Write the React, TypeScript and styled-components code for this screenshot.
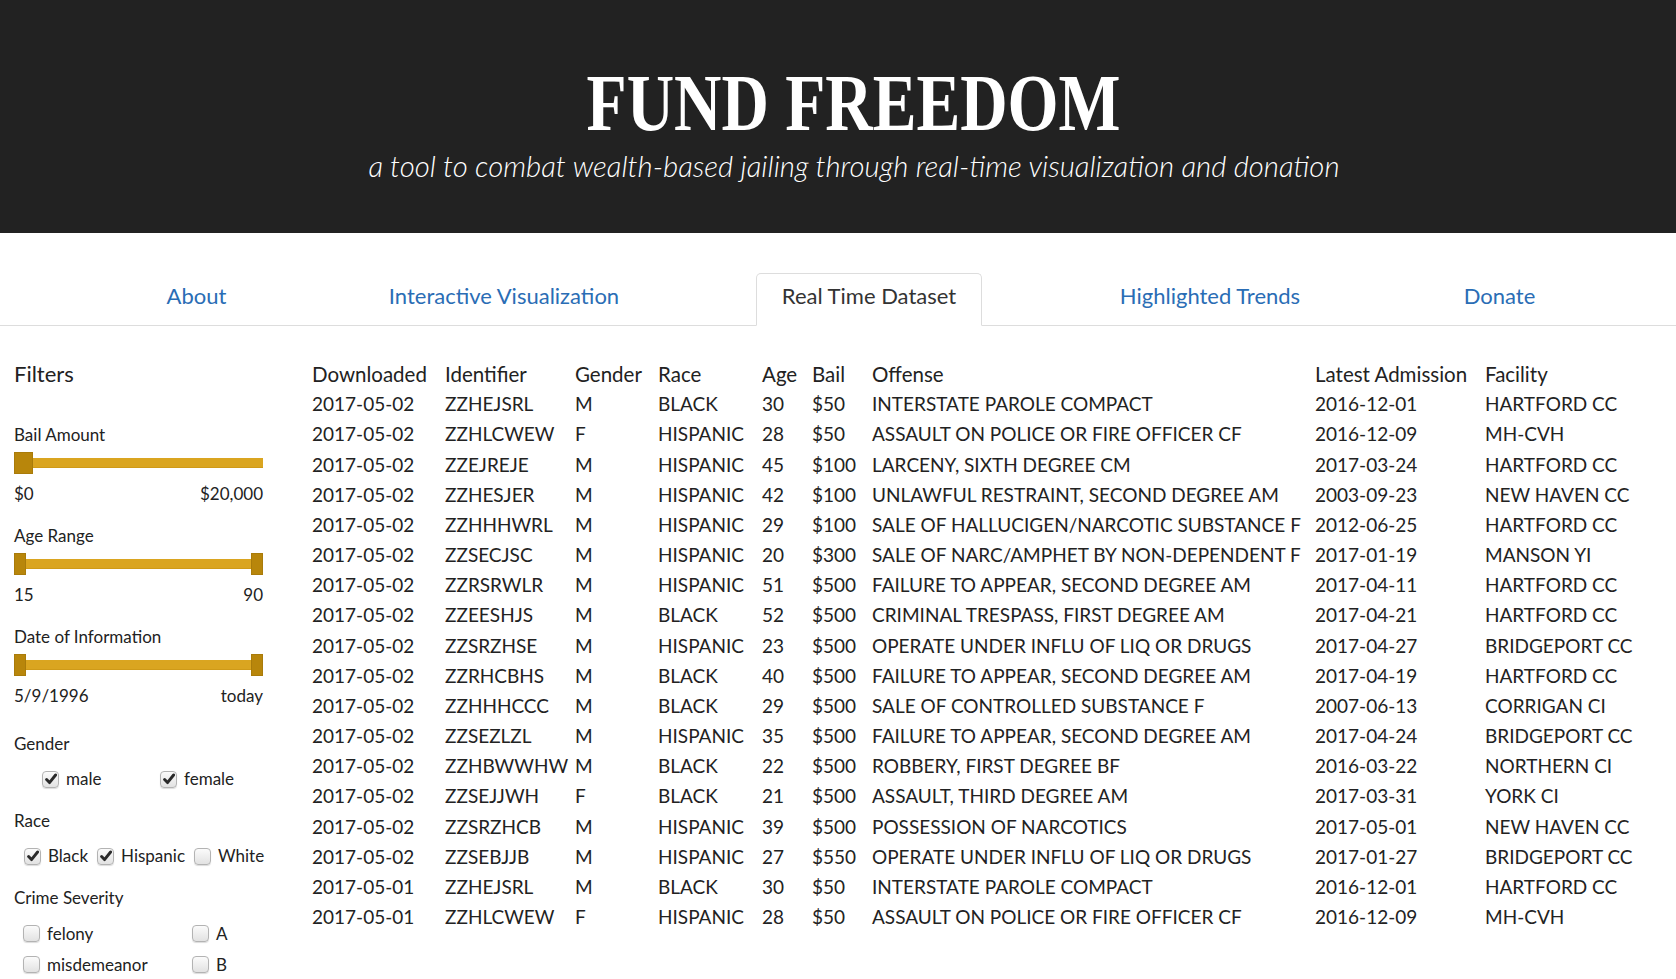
import React from "react";
import styled, { createGlobalStyle } from "styled-components";

const GlobalStyle = createGlobalStyle`
  html, body { margin: 0; padding: 0; overflow: hidden; background: #fff; }
  body { font-family: Lato, "Open Sans", sans-serif; color: #222; }
`;

const Header = styled.header`
  background: #222;
  height: 233px;
  box-sizing: border-box;
  padding: 61px 0 0 32px;
  display: flex;
  flex-direction: column;
  align-items: center;
`;

const Title = styled.h1`
  margin: 0;
  font-family: "Liberation Serif", "Times New Roman", serif;
  font-weight: 700;
  font-size: 80px;
  line-height: 84px;
  color: #fff;
  transform: scaleX(0.82);
  white-space: nowrap;
`;

const Subtitle = styled.p`
  margin: 4px 0 0;
  font-family: Lato, sans-serif;
  font-style: italic;
  font-weight: 300;
  font-size: 29.3px;
  line-height: 34px;
  color: #fff;
  white-space: nowrap;
`;

const Nav = styled.nav`
  margin-top: 40px;
  display: flex;
  padding-left: 141px;
  border-bottom: 1px solid #ddd;
  height: 52px;
`;

const Tab = styled.a<{ $active?: boolean; $w: number }>`
  box-sizing: border-box;
  width: ${(p) => p.$w}px;
  margin-right: 110px;
  height: ${(p) => (p.$active ? 53 : 52)}px;
  border: 1px solid ${(p) => (p.$active ? "#ddd" : "transparent")};
  border-bottom-color: ${(p) => (p.$active ? "#fff" : "transparent")};
  border-radius: 5px 5px 0 0;
  background: #fff;
  display: flex;
  justify-content: center;
  padding-top: 7px;
  font-size: 22px;
  line-height: 30px;
  color: ${(p) => (p.$active ? "#333" : "#2a6db5")};
  text-decoration: none;
  white-space: nowrap;
`;

const Main = styled.main`
  display: flex;
  padding: 33px 14px 0;
`;

const Sidebar = styled.aside`
  width: 249px;
  flex-shrink: 0;
  font-size: 17px;
  line-height: 24px;
`;

const FiltersTitle = styled.h3`
  margin: 0;
  font-size: 22px;
  font-weight: 400;
  line-height: 30px;
`;

const SliderGroup = styled.div<{ $first?: boolean }>`
  margin-top: ${(p) => (p.$first ? 34 : 18)}px;
`;

const Label = styled.div<{ $mt?: number }>`
  margin-top: ${(p) => p.$mt ?? 0}px;
`;

const Track = styled.div`
  position: relative;
  height: 22px;
  margin-top: 5px;
`;

const Bar = styled.div`
  position: absolute;
  left: 0;
  right: 0;
  top: 6px;
  height: 10px;
  background: #daa520;
  border-bottom: 1px solid #cf9a18;
  box-sizing: border-box;
`;

const Handle = styled.div<{ $side: "left" | "right"; $wide?: boolean }>`
  position: absolute;
  top: 0;
  ${(p) => p.$side}: 0;
  width: ${(p) => (p.$wide ? 19 : 12)}px;
  height: 22px;
  background: #b8860b;
  border: 1px solid #a97b0a;
  box-sizing: border-box;
`;

const RangeValues = styled.div`
  display: flex;
  justify-content: space-between;
  margin-top: 8px;
`;

const CheckGrid = styled.div<{ $cols: string; $pl: number; $lh: number }>`
  display: grid;
  grid-template-columns: ${(p) => p.$cols};
  padding-left: ${(p) => p.$pl}px;
  margin-top: 8px;
  line-height: ${(p) => p.$lh}px;
`;

const CheckRow = styled.div`
  display: flex;
  gap: 9px;
  padding-left: 10px;
  margin-top: 8px;
  line-height: 30px;
`;

const CheckItem = styled.label`
  display: inline-flex;
  align-items: center;
  gap: 7px;
`;

const Box = styled.span`
  width: 17px;
  height: 17px;
  box-sizing: border-box;
  border: 1px solid #b3b3b3;
  border-radius: 4px;
  background: linear-gradient(#fbfbfb, #e2e2e2);
  box-shadow: 0 1px 1px rgba(0, 0, 0, 0.14);
  display: inline-flex;
  align-items: center;
  justify-content: center;
`;

const Check = ({ checked, label }: { checked?: boolean; label: string }) => (
  <CheckItem>
    <Box>
      {checked && (
        <svg width="12" height="12" viewBox="0 0 12 12">
          <path d="M1.6 6.6 L4.5 9.6 L10.6 2.0" fill="none" stroke="#2a2a2a" strokeWidth="2.9" strokeLinecap="round" strokeLinejoin="round" />
        </svg>
      )}
    </Box>
    {label}
  </CheckItem>
);

const TableWrap = styled.section`
  margin-left: 49px;
  flex: 1;
  font-size: 19px;
  line-height: 30.17px;
`;

const Row = styled.div<{ $head?: boolean }>`
  display: grid;
  grid-template-columns: 133px 130px 83px 104px 50px 60px 443px 170px 1fr;
  white-space: nowrap;
  font-size: ${(p) => (p.$head ? "20.5px" : "inherit")};
`;

const Cell = styled.span``;

const rows: string[][] = [
  ["2017-05-02", "ZZHEJSRL", "M", "BLACK", "30", "$50", "INTERSTATE PAROLE COMPACT", "2016-12-01", "HARTFORD CC"],
  ["2017-05-02", "ZZHLCWEW", "F", "HISPANIC", "28", "$50", "ASSAULT ON POLICE OR FIRE OFFICER CF", "2016-12-09", "MH-CVH"],
  ["2017-05-02", "ZZEJREJE", "M", "HISPANIC", "45", "$100", "LARCENY, SIXTH DEGREE CM", "2017-03-24", "HARTFORD CC"],
  ["2017-05-02", "ZZHESJER", "M", "HISPANIC", "42", "$100", "UNLAWFUL RESTRAINT, SECOND DEGREE AM", "2003-09-23", "NEW HAVEN CC"],
  ["2017-05-02", "ZZHHHWRL", "M", "HISPANIC", "29", "$100", "SALE OF HALLUCIGEN/NARCOTIC SUBSTANCE F", "2012-06-25", "HARTFORD CC"],
  ["2017-05-02", "ZZSECJSC", "M", "HISPANIC", "20", "$300", "SALE OF NARC/AMPHET BY NON-DEPENDENT F", "2017-01-19", "MANSON YI"],
  ["2017-05-02", "ZZRSRWLR", "M", "HISPANIC", "51", "$500", "FAILURE TO APPEAR, SECOND DEGREE AM", "2017-04-11", "HARTFORD CC"],
  ["2017-05-02", "ZZEESHJS", "M", "BLACK", "52", "$500", "CRIMINAL TRESPASS, FIRST DEGREE AM", "2017-04-21", "HARTFORD CC"],
  ["2017-05-02", "ZZSRZHSE", "M", "HISPANIC", "23", "$500", "OPERATE UNDER INFLU OF LIQ OR DRUGS", "2017-04-27", "BRIDGEPORT CC"],
  ["2017-05-02", "ZZRHCBHS", "M", "BLACK", "40", "$500", "FAILURE TO APPEAR, SECOND DEGREE AM", "2017-04-19", "HARTFORD CC"],
  ["2017-05-02", "ZZHHHCCC", "M", "BLACK", "29", "$500", "SALE OF CONTROLLED SUBSTANCE F", "2007-06-13", "CORRIGAN CI"],
  ["2017-05-02", "ZZSEZLZL", "M", "HISPANIC", "35", "$500", "FAILURE TO APPEAR, SECOND DEGREE AM", "2017-04-24", "BRIDGEPORT CC"],
  ["2017-05-02", "ZZHBWWHW", "M", "BLACK", "22", "$500", "ROBBERY, FIRST DEGREE BF", "2016-03-22", "NORTHERN CI"],
  ["2017-05-02", "ZZSEJJWH", "F", "BLACK", "21", "$500", "ASSAULT, THIRD DEGREE AM", "2017-03-31", "YORK CI"],
  ["2017-05-02", "ZZSRZHCB", "M", "HISPANIC", "39", "$500", "POSSESSION OF NARCOTICS", "2017-05-01", "NEW HAVEN CC"],
  ["2017-05-02", "ZZSEBJJB", "M", "HISPANIC", "27", "$550", "OPERATE UNDER INFLU OF LIQ OR DRUGS", "2017-01-27", "BRIDGEPORT CC"],
  ["2017-05-01", "ZZHEJSRL", "M", "BLACK", "30", "$50", "INTERSTATE PAROLE COMPACT", "2016-12-01", "HARTFORD CC"],
  ["2017-05-01", "ZZHLCWEW", "F", "HISPANIC", "28", "$50", "ASSAULT ON POLICE OR FIRE OFFICER CF", "2016-12-09", "MH-CVH"],
];

const headers = ["Downloaded", "Identifier", "Gender", "Race", "Age", "Bail", "Offense", "Latest Admission", "Facility"];

const tabs = [
  { label: "About", w: 111 },
  { label: "Interactive Visualization", w: 284 },
  { label: "Real Time Dataset", w: 226, active: true },
  { label: "Highlighted Trends", w: 236 },
  { label: "Donate", w: 123 },
];

const Slider = ({ label, min, max, range, first }: { label: string; min: string; max: string; range?: boolean; first?: boolean }) => (
  <SliderGroup $first={first}>
    <Label>{label}</Label>
    <Track>
      <Bar />
      <Handle $side="left" $wide={!range} />
      {range && <Handle $side="right" />}
    </Track>
    <RangeValues>
      <span>{min}</span>
      <span>{max}</span>
    </RangeValues>
  </SliderGroup>
);

export default function App() {
  return (
    <>
      <GlobalStyle />
      <Header>
        <Title>FUND FREEDOM</Title>
        <Subtitle>a tool to combat wealth-based jailing through real-time visualization and donation</Subtitle>
      </Header>
      <Nav>
        {tabs.map((t) => (
          <Tab key={t.label} $w={t.w} $active={t.active} href="#">
            {t.label}
          </Tab>
        ))}
      </Nav>
      <Main>
        <Sidebar>
          <FiltersTitle>Filters</FiltersTitle>
          <Slider first label="Bail Amount" min="$0" max="$20,000" />
          <Slider range label="Age Range" min="15" max="90" />
          <Slider range label="Date of Information" min="5/9/1996" max="today" />
          <Label $mt={24}>Gender</Label>
          <CheckGrid $cols="118px 1fr" $pl={28} $lh={30}>
            <Check checked label="male" />
            <Check checked label="female" />
          </CheckGrid>
          <Label $mt={15}>Race</Label>
          <CheckRow>
            <Check checked label="Black" />
            <Check checked label="Hispanic" />
            <Check label="White" />
          </CheckRow>
          <Label $mt={15}>Crime Severity</Label>
          <CheckGrid $cols="169px 1fr" $pl={9} $lh={31}>
            <Check label="felony" />
            <Check label="A" />
            <Check label="misdemeanor" />
            <Check label="B" />
          </CheckGrid>
        </Sidebar>
        <TableWrap>
          <Row $head>
            {headers.map((h) => (
              <Cell key={h}>{h}</Cell>
            ))}
          </Row>
          {rows.map((r, i) => (
            <Row key={i}>
              {r.map((c, j) => (
                <Cell key={j}>{c}</Cell>
              ))}
            </Row>
          ))}
        </TableWrap>
      </Main>
    </>
  );
}
